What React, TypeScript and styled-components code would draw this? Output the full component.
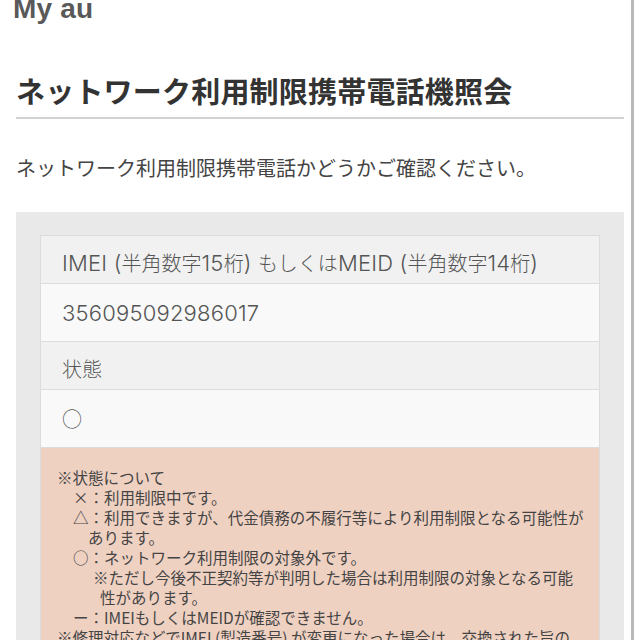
import React from "react";
import styled, { createGlobalStyle } from "styled-components";

const GlobalStyle = createGlobalStyle`
  html, body { margin: 0; padding: 0; background: #ffffff; }
  body {
    font-family: "Noto Sans CJK JP", "Noto Sans", sans-serif;
    color: #444;
    overflow: hidden;
  }
`;

const Page = styled.div`
  box-sizing: border-box;
  width: 634px;
  min-height: 640px;
  padding: 0 7px 0 16px;
  border-right: 3px solid #b9b9b9;
  display: flex;
  flex-direction: column;
`;

const Brand = styled.div`
  font-family: "Liberation Sans", Arial, sans-serif;
  font-weight: 700;
  font-size: 28px;
  line-height: 28px;
  color: #595959;
  margin: -5px 0 0 -3px;
  letter-spacing: 0.2px;
`;

const Title = styled.h1`
  margin: 47px 0 0;
  padding-bottom: 7px;
  font-size: 29px;
  line-height: 40px;
  font-weight: 700;
  color: #333;
  border-bottom: 2px solid #d2d2d2;
  white-space: nowrap;
  letter-spacing: 0.2px;
`;

const Lead = styled.p`
  margin: 34px 0 0;
  font-size: 20px;
  line-height: 30px;
  font-weight: 400;
  color: #444;
  white-space: nowrap;
`;

const Panel = styled.section`
  margin-top: 29px;
  background: #e9e9e9;
  padding: 23px 24px 0;
  flex: 1;
`;

const Table = styled.div`
  border: 1px solid #dcdcdc;
  border-bottom: none;
  display: flex;
  flex-direction: column;
`;

const Cell = styled.div<{ $kind: "label" | "value" }>`
  box-sizing: border-box;
  display: flex;
  align-items: center;
  padding: ${(p) => (p.$kind === "label" ? "7px 21px 0" : "0 21px")};
  height: ${(p) => (p.$kind === "label" ? "48px" : "58px")};
  background: ${(p) => (p.$kind === "label" ? "#f1f1f1" : "#f9f9f9")};
  border-bottom: 1px solid #dcdcdc;
  font-size: 20px;
  font-weight: 300;
  color: #555;
  white-space: nowrap;
`;

const CellText = styled.span`
  line-height: 30px;
`;

const Latin = styled.span`
  font-family: Inter, "Noto Sans", sans-serif;
  font-size: 22px;
  font-weight: 300;
  letter-spacing: 0.2px;
`;

const Note = styled.div`
  background: #efd1c2;
  padding: 19px 10px 0 16px;
  font-size: 15.5px;
  line-height: 20px;
  color: #444;
  font-weight: 400;
`;

const NoteLine = styled.div<{ $indent: number }>`
  padding-left: ${(p) => p.$indent}px;
  white-space: nowrap;
`;

const notes: [number, string][] = [
  [0, "※状態について"],
  [16, "×：利用制限中です。"],
  [16, "△：利用できますが、代金債務の不履行等により利用制限となる可能性が"],
  [31, "あります。"],
  [16, "○：ネットワーク利用制限の対象外です。"],
  [36, "※ただし今後不正契約等が判明した場合は利用制限の対象となる可能"],
  [43, "性があります。"],
  [16, "ー：IMEIもしくはMEIDが確認できません。"],
  [0, "※修理対応などでIMEI (製造番号) が変更になった場合は、交換された旨の"],
];

export default function App() {
  return (
    <>
      <GlobalStyle />
      <Page>
        <Brand>My au</Brand>
        <Title>ネットワーク利用制限携帯電話機照会</Title>
        <Lead>ネットワーク利用制限携帯電話かどうかご確認ください。</Lead>
        <Panel>
          <Table>
            <Cell $kind="label">
              <CellText>
                <Latin>IMEI (</Latin>半角数字<Latin>15</Latin>桁<Latin>) </Latin>もしくは
                <Latin>MEID (</Latin>半角数字<Latin>14</Latin>桁<Latin>)</Latin>
              </CellText>
            </Cell>
            <Cell $kind="value">
              <CellText>
                <Latin>356095092986017</Latin>
              </CellText>
            </Cell>
            <Cell $kind="label">
              <CellText>状態</CellText>
            </Cell>
            <Cell $kind="value">
              <CellText>○</CellText>
            </Cell>
            <Note>
              {notes.map(([indent, text], i) => (
                <NoteLine key={i} $indent={indent}>
                  {text}
                </NoteLine>
              ))}
            </Note>
          </Table>
        </Panel>
      </Page>
    </>
  );
}
